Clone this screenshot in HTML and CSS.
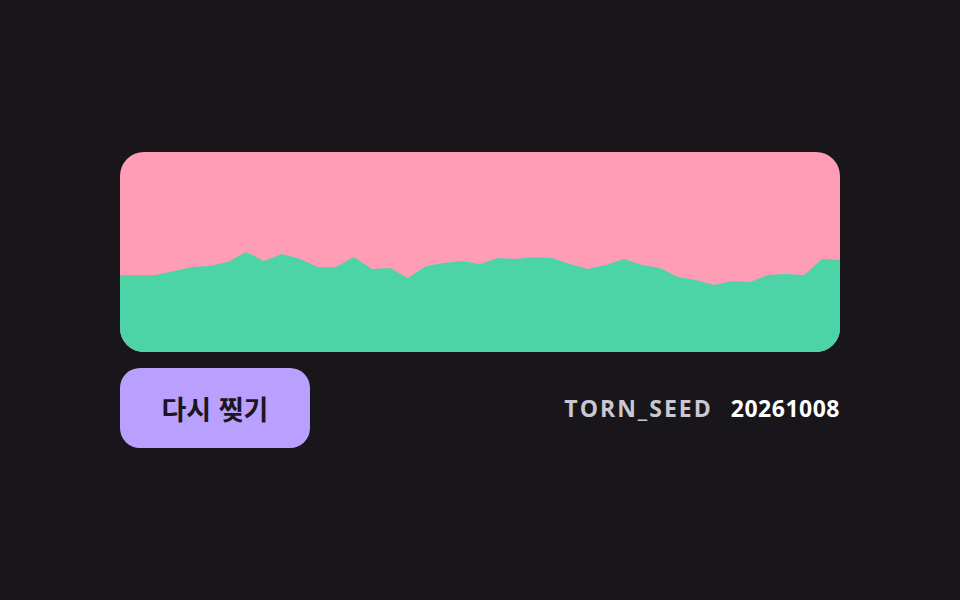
FILE: index.html
```html
<!DOCTYPE html>
<html lang="ko">

<head>
  <meta charset="UTF-8">
  <meta name="viewport" content="width=device-width, initial-scale=1.0">
  <title>Torn</title>
  <link rel="stylesheet" href="styles.css">
</head>

<body>
  <div class="stage">
    <div class="paper">
      <svg class="tear" viewBox="0 0 720 200" preserveAspectRatio="none">
        <path fill="#4dd4a6" d="M0 123 L18 123 L36 123 L54 119 L72 115 L90 114 L108 110 L126 100 L144 109 L162 102 L180 107 L198 115 L216 115 L234 105 L252 117 L270 116 L288 126 L306 114 L324 111 L342 109 L360 112 L378 106 L396 107 L414 105 L432 106 L450 112 L468 117 L486 113 L504 107 L522 113 L540 116 L558 125 L576 128 L594 133 L612 129 L630 130 L648 123 L666 122 L684 123 L702 107 L720 108 L720 200 L0 200 Z" />
      </svg>
    </div>
    <div class="bar">
      <button class="retry">다시 찢기</button>
      <div class="seed">
        <span class="seed-label">TORN_SEED</span>
        <span class="seed-value">20261008</span>
      </div>
    </div>
  </div>
</body>

</html>
```

FILE: styles.css
```css
* {
  margin: 0;
  padding: 0;
  box-sizing: border-box;
}

body {
  height: 600px;
  background-color: #18161b;
  display: flex;
  align-items: center;
  justify-content: center;
  font-family: "Open Sans", "Noto Sans CJK KR", sans-serif;
}

.stage {
  width: 720px;
  display: flex;
  flex-direction: column;
  gap: 16px;
}

.paper {
  height: 200px;
  background-color: #ff9cb6;
  border-radius: 24px;
  overflow: hidden;
}

.tear {
  display: block;
  width: 100%;
  height: 100%;
}

.bar {
  display: flex;
  align-items: center;
  justify-content: space-between;
}

.retry {
  width: 190px;
  height: 80px;
  border: none;
  border-radius: 20px;
  background-color: #b9a0ff;
  color: #1b1720;
  font-family: "Noto Sans CJK KR", sans-serif;
  font-size: 27px;
  font-weight: 700;
}

.seed {
  display: flex;
  align-items: baseline;
  gap: 18px;
  font-size: 23px;
  font-weight: 700;
}

.seed-label {
  color: #c9c7d0;
  letter-spacing: 2px;
}

.seed-value {
  color: #ffffff;
  letter-spacing: 0.5px;
}
```
